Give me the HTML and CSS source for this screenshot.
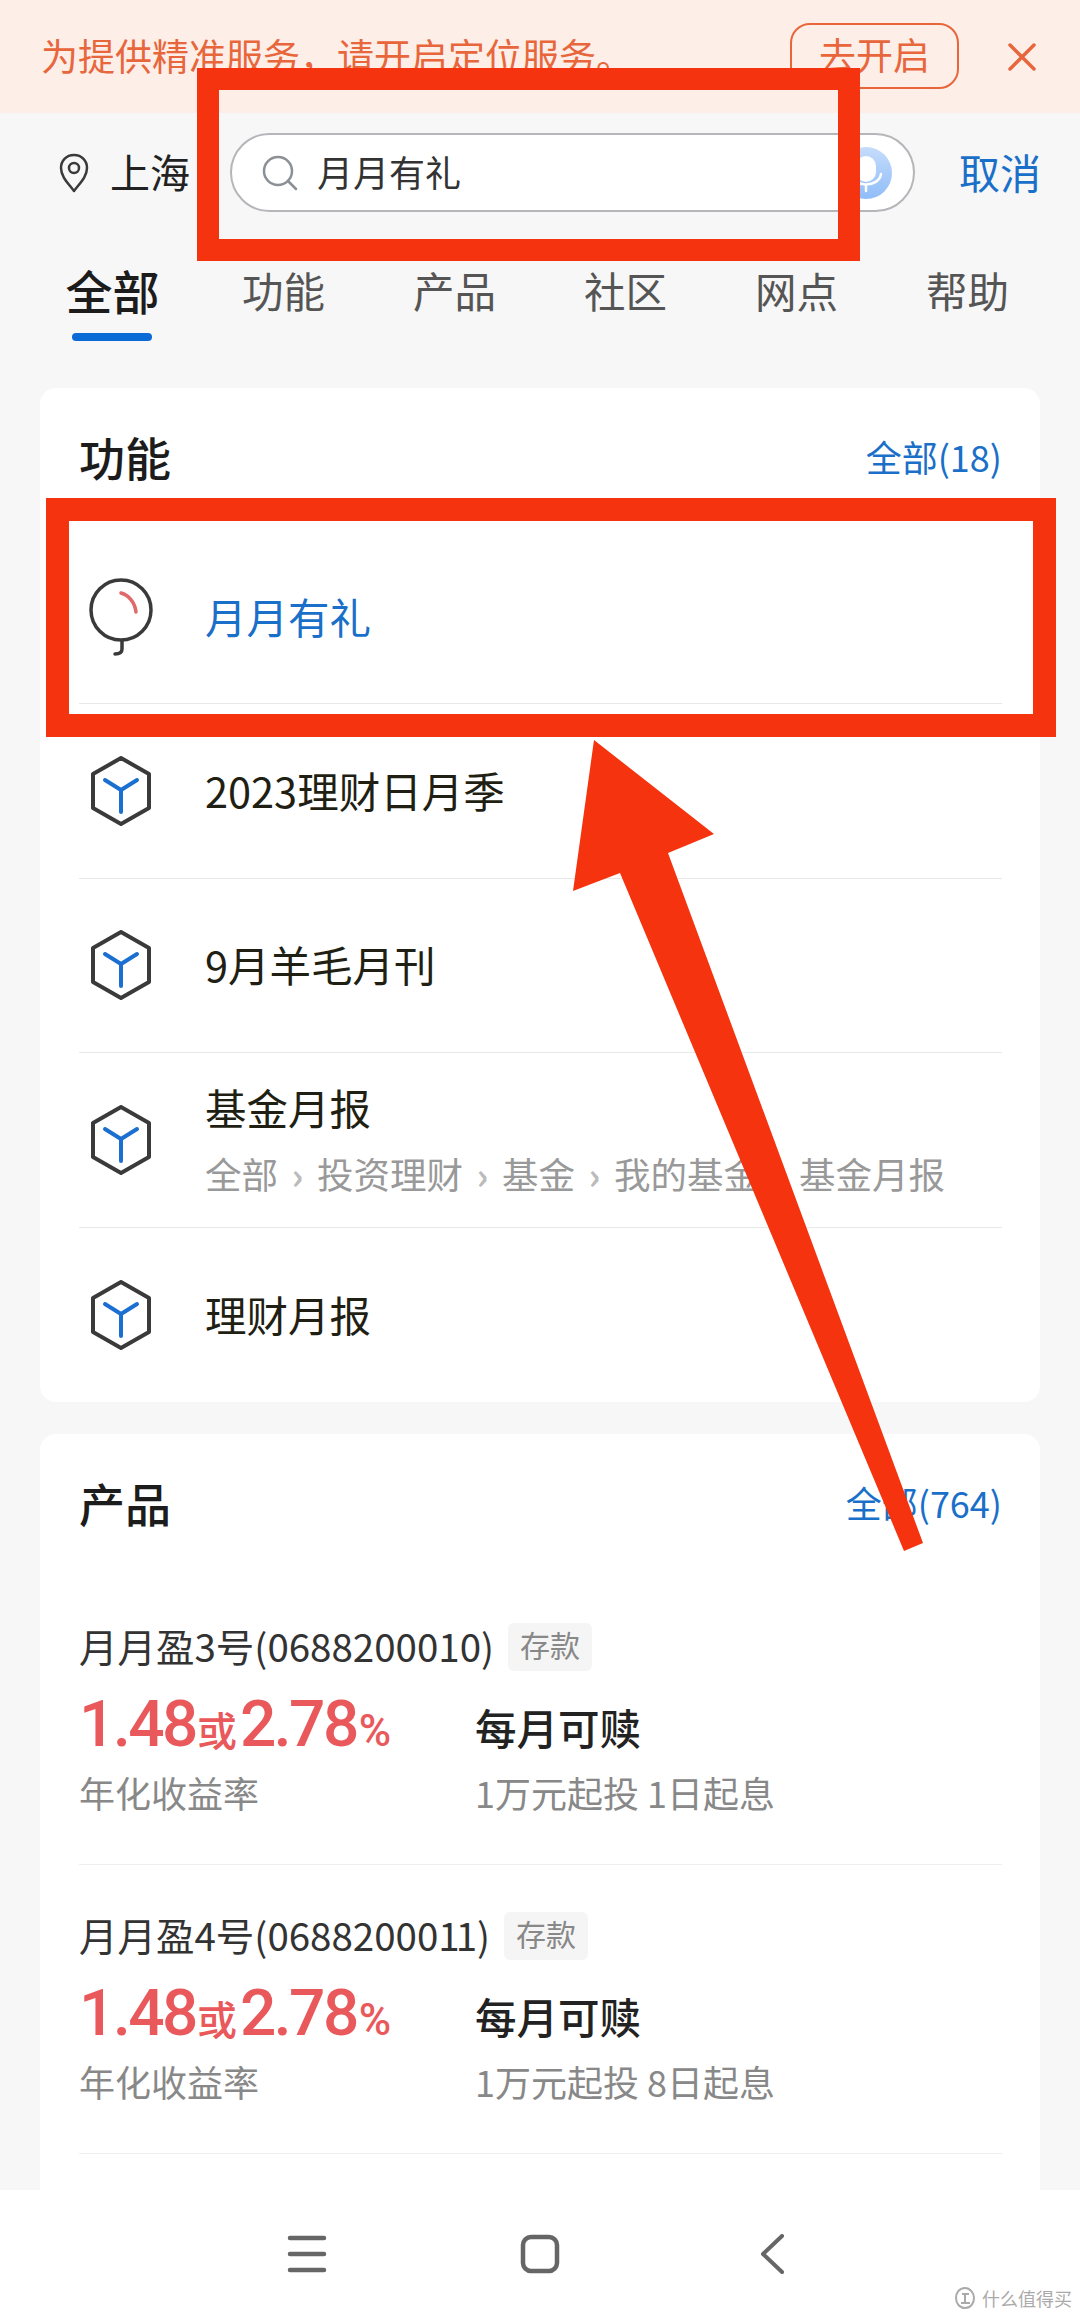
FILE: index.html
```html
<!DOCTYPE html>
<html>
<head>
    <meta charset="utf-8">
    <link rel="stylesheet" href="styles.css">
</head>
<body>
    <svg class="defs" width="0" height="0">
        <symbol id="hex" viewBox="0 0 64 70">
            <path d="M32 2 L60 18 V52 L32 68 L4 52 V18 Z" fill="none" stroke="#3a3a3a" stroke-width="4" stroke-linejoin="round"/>
            <path d="M16 24 L32 34 L48 24 M32 34 V56" fill="none" stroke="#1a6fd0" stroke-width="4" stroke-linecap="round" stroke-linejoin="round"/>
        </symbol>
    </svg>

    <div class="page">
        <div class="banner">
            <span class="banner-text">为提供精准服务，请开启定位服务。</span>
            <span class="banner-btn">去开启</span>
            <svg class="banner-close" width="30" height="30" viewBox="0 0 30 30">
                <path d="M3 3 L27 27 M27 3 L3 27" stroke="#e8663c" stroke-width="3.5" stroke-linecap="round"/>
            </svg>
        </div>

        <div class="search-row">
            <svg class="pin" width="34" height="40" viewBox="0 0 34 40">
                <path d="M17 2 C9 2 4 8 4 15 C4 24 12 31 17 38 C22 31 30 24 30 15 C30 8 25 2 17 2 Z" fill="none" stroke="#3a3a3a" stroke-width="2.5" stroke-linejoin="round"/>
                <circle cx="17" cy="15" r="5" fill="none" stroke="#3a3a3a" stroke-width="2.5"/>
            </svg>
            <span class="city">上海</span>
            <div class="search-box">
                <svg class="search-icon" width="36" height="36" viewBox="0 0 36 36">
                    <circle cx="16" cy="16" r="14" fill="none" stroke="#8b8f96" stroke-width="2.5"/>
                    <path d="M26 26 L34 34" stroke="#8b8f96" stroke-width="2.5" stroke-linecap="round"/>
                </svg>
                <span class="search-text">月月有礼</span>
                <svg class="mic" width="52" height="52" viewBox="0 0 52 52">
                    <defs>
                        <linearGradient id="micBg" x1="0" y1="0" x2="0" y2="1">
                            <stop offset="0" stop-color="#c6dcfb"/>
                            <stop offset="1" stop-color="#8fbdf8"/>
                        </linearGradient>
                    </defs>
                    <circle cx="26" cy="26" r="26" fill="url(#micBg)"/>
                    <rect x="16" y="9" width="20" height="26" rx="10" fill="#fff"/>
                    <path d="M11 27 C13 41 39 41 41 27 M26 38 V44" fill="none" stroke="#fff" stroke-width="2.5" stroke-linecap="round"/>
                </svg>
            </div>
            <span class="cancel">取消</span>
        </div>

        <div class="tabs">
            <div class="tab active">全部</div>
            <div class="tab">功能</div>
            <div class="tab">产品</div>
            <div class="tab">社区</div>
            <div class="tab">网点</div>
            <div class="tab">帮助</div>
        </div>

        <div class="content">
            <div class="card">
                <div class="card-head">
                    <span class="card-title">功能</span>
                    <span class="card-more">全部(18)</span>
                </div>
                <div class="func-row">
                    <svg class="func-icon" width="64" height="80" viewBox="0 0 64 80">
                        <circle cx="32" cy="33" r="30" fill="none" stroke="#3a3a3a" stroke-width="3.5"/>
                        <path d="M32 16 C40 18 46 26 47 35" fill="none" stroke="#e0696c" stroke-width="3.5" stroke-linecap="round"/>
                        <path d="M33 64 V72 C33 76 30 77 26 77" fill="none" stroke="#3a3a3a" stroke-width="3.5" stroke-linecap="round"/>
                    </svg>
                    <span class="func-name hit">月月有礼</span>
                </div>
                <div class="func-row">
                    <svg class="func-icon" width="64" height="70"><use href="#hex"/></svg>
                    <span class="func-name">2023理财日月季</span>
                </div>
                <div class="func-row">
                    <svg class="func-icon" width="64" height="70"><use href="#hex"/></svg>
                    <span class="func-name">9月羊毛月刊</span>
                </div>
                <div class="func-row">
                    <svg class="func-icon" width="64" height="70"><use href="#hex"/></svg>
                    <div>
                        <div class="func-name">基金月报</div>
                        <div class="crumbs">
                            <span>全部</span><i>›</i><span>投资理财</span><i>›</i><span>基金</span><i>›</i><span>我的基金</span><i>›</i><span>基金月报</span>
                        </div>
                    </div>
                </div>
                <div class="func-row">
                    <svg class="func-icon" width="64" height="70"><use href="#hex"/></svg>
                    <span class="func-name">理财月报</span>
                </div>
            </div>

            <div class="card products">
                <div class="card-head">
                    <span class="card-title">产品</span>
                    <span class="card-more">全部(764)</span>
                </div>
                <div class="product">
                    <div class="product-name">
                        <span class="code">月月盈3号(0688200010)</span>
                        <span class="tag">存款</span>
                    </div>
                    <div class="product-grid">
                        <div class="rate">1.48<small>或</small>2.78<em>%</em></div>
                        <div class="redeem">每月可赎</div>
                        <div class="note">年化收益率</div>
                        <div class="note">1万元起投 1日起息</div>
                    </div>
                </div>
                <div class="product">
                    <div class="product-name">
                        <span class="code">月月盈4号(06882000<span class="ones">11</span>)</span>
                        <span class="tag">存款</span>
                    </div>
                    <div class="product-grid">
                        <div class="rate">1.48<small>或</small>2.78<em>%</em></div>
                        <div class="redeem">每月可赎</div>
                        <div class="note">年化收益率</div>
                        <div class="note">1万元起投 8日起息</div>
                    </div>
                </div>
            </div>
        </div>

        <div class="navbar">
            <svg width="40" height="40" viewBox="0 0 40 40">
                <path d="M3 4 H37 M3 20 H37 M3 36 H37" stroke="#666" stroke-width="4.5" stroke-linecap="round"/>
            </svg>
            <svg width="40" height="40" viewBox="0 0 40 40">
                <rect x="3" y="3" width="34" height="34" rx="8" fill="none" stroke="#666" stroke-width="4.5"/>
            </svg>
            <svg width="40" height="40" viewBox="0 0 40 40">
                <path d="M29 2 L10 20 L29 38" fill="none" stroke="#666" stroke-width="4" stroke-linecap="round" stroke-linejoin="round"/>
            </svg>
        </div>
    </div>

    <!-- hand drawn markup on top of the screenshot -->
    <svg class="markup" width="1080" height="2318" viewBox="0 0 1080 2318">
        <rect x="208" y="79" width="641" height="171" fill="none" stroke="#f5340f" stroke-width="22"/>
        <rect x="57.5" y="509.5" width="987" height="216" fill="none" stroke="#f5340f" stroke-width="23"/>
        <polygon points="594,740 714,834 668,853 923,1543 904,1551 620,873 573,891" fill="#f5340f"/>
    </svg>

    <div class="watermark">
        <svg width="22" height="24" viewBox="0 0 22 24">
            <path d="M11 2 C5 2 2 7 2 12 C2 18 6 22 11 22 C17 22 20 17 20 12 C20 7 16 2 11 2 Z M8 8 H15 M11 8 V17 M7 17 H16" fill="none" stroke="#aaa" stroke-width="2"/>
        </svg>
        <span>什么值得买</span>
    </div>
</body>
</html>
```

FILE: styles.css
```css
* {
    box-sizing: border-box;
}

body {
    margin: 0;
    width: 1080px;
    height: 2318px;
    overflow: hidden;
    position: relative;
    background: #f7f7f7;
    font-family: "Noto Sans CJK SC", "Noto Sans", sans-serif;
    color: #222;
}

.defs {
    position: absolute;
}

.page {
    height: 2318px;
    display: flex;
    flex-direction: column;
}

.banner {
    flex: none;
    height: 113px;
    display: flex;
    align-items: center;
    padding: 0 43px 0 41px;
    background: #feeee8;
    color: #e8663c;
}

.banner-text {
    flex: 1;
    font-size: 37px;
    line-height: 44px;
    margin-top: -4px;
}

.banner-btn {
    width: 169px;
    height: 66px;
    margin-right: 48px;
    margin-top: -2px;
    border: 2px solid #e8663c;
    border-radius: 20px;
    font-size: 37px;
    line-height: 58px;
    text-align: center;
}

.search-row {
    flex: none;
    height: 79px;
    margin-top: 20px;
    padding-left: 57px;
    display: flex;
    align-items: center;
}

.city {
    margin-left: 19px;
    margin-top: -4px;
    font-size: 40px;
    line-height: 48px;
}

.search-box {
    width: 685px;
    height: 79px;
    margin-left: 40px;
    padding: 0 21px 0 30px;
    display: flex;
    align-items: center;
    background: #fff;
    border: 2px solid #b4b6ba;
    border-radius: 40px;
}

.search-text {
    flex: 1;
    margin-left: 19px;
    margin-top: -4px;
    font-size: 36px;
    color: #333;
}

.cancel {
    margin-left: 44px;
    margin-top: -4px;
    font-size: 41px;
    color: #1a6fc9;
}

.tabs {
    flex: none;
    display: grid;
    grid-template-columns: repeat(6, 171px);
    padding: 56px 0 0 27px;
    margin-bottom: 47px;
}

.tab {
    height: 73px;
    font-size: 41.5px;
    line-height: 44px;
    text-align: center;
    color: #555;
    position: relative;
}

.tab.active {
    font-size: 47px;
    font-weight: 500;
    color: #1c1c1c;
}

.tab.active:after {
    content: "";
    position: absolute;
    left: 45px;
    bottom: 0;
    width: 80px;
    height: 8px;
    border-radius: 4px;
    background: #0a6bd6;
}

.content {
    flex: 1;
    min-height: 0;
    overflow: hidden;
    padding: 0 40px;
}

.card {
    padding: 0 38px 0 39px;
    margin-bottom: 32px;
    background: #fff;
    border-radius: 16px;
}

.card.products {
    padding-bottom: 120px;
}

.card-head {
    height: 142px;
    display: flex;
    justify-content: space-between;
    align-items: center;
}

.card-title {
    margin-top: -6px;
    font-size: 46px;
    font-weight: 500;
    color: #1c1c1c;
}

.card-more {
    margin-top: -6px;
    font-size: 36px;
    color: #1a6fc9;
}

.func-row {
    height: 174.4px;
    display: flex;
    align-items: center;
    border-bottom: 1px solid #e8e8e8;
}

.func-row:last-child {
    border-bottom: none;
}

.func-icon {
    flex: none;
    margin-left: 10px;
    margin-right: 52px;
}

.func-name {
    margin-top: -2px;
    font-size: 41.5px;
    line-height: 50px;
    color: #1f1f14;
}

.func-name.hit {
    color: #1a6fc9;
}

.crumbs {
    display: flex;
    margin-top: 20px;
    font-size: 36.5px;
    line-height: 44px;
    color: #999;
}

.crumbs i {
    width: 39px;
    font-style: normal;
    font-weight: 700;
    text-align: center;
    color: #bbb;
}

.product {
    height: 289px;
    padding-top: 47px;
    border-bottom: 1px solid #efefef;
}

.product-name {
    height: 48px;
    display: flex;
    align-items: center;
    gap: 14px;
    font-size: 38.5px;
    color: #333;
}

.code {
    margin-top: -4px;
    white-space: nowrap;
}

.ones {
    letter-spacing: -4px;
    margin-right: 4px;
}

.tag {
    height: 48px;
    padding: 0 12px;
    font-size: 30px;
    line-height: 42px;
    color: #888;
    background: #f5f5f5;
    border-radius: 6px;
}

.product-grid {
    display: grid;
    grid-template-columns: 396px 1fr;
    grid-template-rows: 60px 42px;
    row-gap: 16px;
    margin-top: 24px;
}

.rate {
    font-family: Roboto, sans-serif;
    font-size: 64px;
    font-weight: 500;
    line-height: 60px;
    letter-spacing: -2.5px;
    color: #e9595c;
}

.rate small {
    margin: 0 3px 0 1px;
    font-family: "Noto Sans CJK SC", sans-serif;
    font-size: 40px;
    letter-spacing: 0;
}

.rate em {
    margin-left: 2px;
    font-style: normal;
    font-size: 44px;
    letter-spacing: 0;
}

.redeem {
    font-size: 41.5px;
    font-weight: 500;
    line-height: 64px;
    color: #222;
}

.note {
    font-size: 36px;
    line-height: 42px;
    color: #888;
}

.navbar {
    flex: none;
    height: 128px;
    display: grid;
    grid-template-columns: repeat(3, 233px);
    justify-content: center;
    justify-items: center;
    align-items: center;
    background: #fff;
}

.markup {
    position: absolute;
    left: 0;
    top: 0;
}

.watermark {
    position: absolute;
    left: 954px;
    top: 2286px;
    display: flex;
    align-items: center;
    gap: 6px;
    font-size: 18px;
    line-height: 24px;
    color: #aaa;
}
```
